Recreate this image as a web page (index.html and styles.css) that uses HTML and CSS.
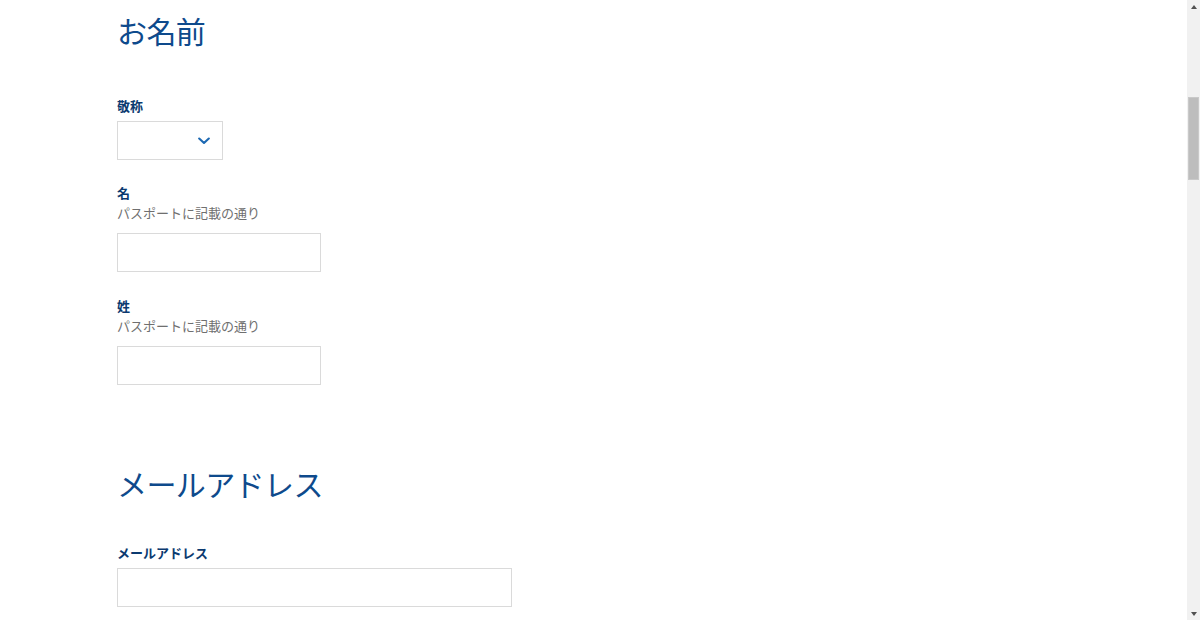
FILE: index.html
```html
<!DOCTYPE html>
<html lang="ja">
<head>
<meta charset="utf-8">
<title>お名前</title>
<link rel="stylesheet" href="styles.css">
</head>
<body>
<main class="page">
  <section class="section section-name">
    <h2 class="section-title">お名前</h2>
    <div class="field field-select">
      <div class="label-group">
        <div class="label">敬称</div>
      </div>
      <div class="select">
        <svg class="chevron" width="12" height="8" viewBox="0 0 12 8" aria-hidden="true">
          <polyline points="1.2,1.5 6,6 10.8,1.5" fill="none" stroke="#1d69b3" stroke-width="2.1" stroke-linecap="round" stroke-linejoin="round"/>
        </svg>
      </div>
    </div>
    <div class="field">
      <div class="label-group has-hint">
        <div class="label">名</div>
        <div class="hint">パスポートに記載の通り</div>
      </div>
      <div class="input input-name"></div>
    </div>
    <div class="field">
      <div class="label-group has-hint">
        <div class="label">姓</div>
        <div class="hint">パスポートに記載の通り</div>
      </div>
      <div class="input input-name"></div>
    </div>
  </section>
  <section class="section section-mail">
    <h2 class="section-title">メールアドレス</h2>
    <div class="field">
      <div class="label-group">
        <div class="label">メールアドレス</div>
      </div>
      <div class="input input-mail"></div>
    </div>
  </section>
</main>
<div class="scrollbar" aria-hidden="true">
  <div class="sb-arrow sb-up"></div>
  <div class="sb-thumb"></div>
  <div class="sb-fill"></div>
  <div class="sb-arrow sb-down"></div>
</div>
</body>
</html>
```
FILE: styles.css
```css
html, body {
  margin: 0;
  padding: 0;
  background: #ffffff;
}

body {
  font-family: "Noto Sans CJK JP", "Noto Sans", sans-serif;
  color: #0b3a70;
  overflow: hidden;
}

.page {
  padding: 10px 0 0 117px;
}

.section {
  display: flex;
  flex-direction: column;
  align-items: flex-start;
}

.section-mail {
  margin-top: 54px;
}

.section-title {
  margin: 0 0 40px 0;
  font-size: 30px;
  line-height: 40px;
  font-weight: 400;
  color: #0e4a8c;
  letter-spacing: -0.6px;
}

.section-name .section-title {
  margin-bottom: 46px;
}

.field {
  display: flex;
  flex-direction: column;
  align-items: flex-start;
  margin-bottom: 24px;
}

.field-select {
  margin-bottom: 23px;
}

.label-group {
  margin-bottom: 5px;
}

.label-group.has-hint {
  margin-bottom: 10px;
}

.label {
  font-size: 13px;
  line-height: 20px;
  font-weight: 700;
  color: #0b3a70;
}

.hint {
  font-size: 13px;
  line-height: 20px;
  font-weight: 400;
  color: #6f6f6f;
}

.select,
.input {
  box-sizing: border-box;
  height: 39px;
  border: 1px solid #dadada;
  background: #ffffff;
}

.select {
  width: 106px;
  display: flex;
  align-items: center;
  justify-content: flex-end;
  padding-right: 12px;
}

.chevron {
  display: block;
  margin-top: 1px;
}

.input-name {
  width: 204px;
}

.input-mail {
  width: 395px;
}

/* browser scrollbar as seen in the screenshot */
.scrollbar {
  position: fixed;
  top: 0;
  right: 0;
  bottom: 0;
  width: 13px;
  background: #f1f1f1;
  display: flex;
  flex-direction: column;
  align-items: center;
}

.sb-arrow {
  height: 15px;
  width: 13px;
  display: flex;
  justify-content: center;
  flex: none;
}

.sb-up::before,
.sb-down::before {
  content: "";
  width: 0;
  height: 0;
  border-left: 3.5px solid transparent;
  border-right: 3.5px solid transparent;
}

.sb-up {
  align-items: flex-start;
}

.sb-up::before {
  margin-top: 5px;
  border-bottom: 4px solid #505050;
}

.sb-down {
  align-items: flex-end;
}

.sb-down::before {
  margin-bottom: 4px;
  border-top: 4px solid #505050;
}

.sb-thumb {
  flex: none;
  margin-top: 82px;
  width: 11px;
  height: 83px;
  box-sizing: border-box;
  background: #bdbdbd;
  border: 1px solid #c9c9c9;
}

.sb-fill {
  flex: 1;
}
```
